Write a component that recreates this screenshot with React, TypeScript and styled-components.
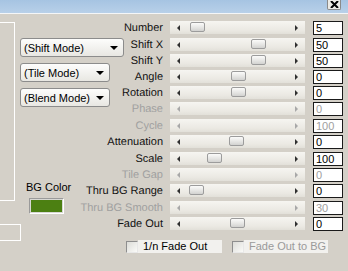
import React from 'react'
import styled, { createGlobalStyle } from 'styled-components'

const GlobalStyle = createGlobalStyle`
  html, body {
    margin: 0;
    padding: 0;
    background: #d4d0c8;
    font-family: 'Liberation Sans', Arial, sans-serif;
    font-size: 11px;
    color: #000;
    overflow: hidden;
  }
`

const Window = styled.div`
  width: 348px;
  height: 271px;
  background: #d4d0c8;
`

const TitleBar = styled.div`
  height: 13px;
  border-bottom: 1px solid #f4f6f8;
  background: linear-gradient(#a6c4e2, #b8d0e9);
  display: flex;
  justify-content: flex-end;
  align-items: flex-start;
  padding-right: 7px;
`

const CloseButton = styled.div`
  width: 14px;
  height: 10px;
  box-sizing: border-box;
  background: #ecebe6;
  border: 1px solid #8a8a8a;
  border-top: none;
  border-radius: 0 0 2px 2px;
  display: flex;
  align-items: center;
  justify-content: center;
`

const Body = styled.div`
  display: grid;
  grid-template-columns: 20px 143px 142px 38px;
  grid-template-rows: 17px 16px 16px 16px 16px 17px 16px 17px 16px 16px 17px 16px 16px auto;
  padding-top: 6px;
`

const Strip = styled.div`
  grid-column: 1;
  grid-row: 1 / 15;
  display: flex;
  flex-direction: column;
`

const StripBox = styled.div<{ $top: number; $height: number; $width: number }>`
  margin-top: ${(p) => p.$top}px;
  height: ${(p) => p.$height}px;
  width: ${(p) => p.$width}px;
  box-sizing: border-box;
  border: 1px solid #fff;
  border-left: none;
`

const ModePanel = styled.div`
  grid-column: 2;
  grid-row: 1 / 14;
  display: flex;
  flex-direction: column;
  align-items: flex-start;
  padding-top: 18px;
  gap: 6px;
`

const Select = styled.div<{ $width: number }>`
  width: ${(p) => p.$width}px;
  height: 19px;
  box-sizing: border-box;
  border: 1px solid #8c8c8c;
  border-radius: 3px;
  background: linear-gradient(#fdfdfc, #e8e7e2);
  display: flex;
  align-items: center;
  justify-content: space-between;
  padding: 0 5px 0 3px;
  font-size: 11px;
`

const DownArrow = styled.span`
  width: 0;
  height: 0;
  border-left: 4px solid transparent;
  border-right: 4px solid transparent;
  border-top: 4px solid #000;
`

const ColorBlock = styled.div`
  margin-top: 68px;
  display: flex;
  flex-direction: column;
  align-items: flex-start;
  padding-left: 6px;
  gap: 4px;
`

const ColorLabel = styled.div`
  line-height: 13px;
`

const Swatch = styled.div`
  margin-left: 3px;
  width: 35px;
  height: 16px;
  box-sizing: border-box;
  border: 1px solid #9a9a9a;
  border-right-color: #fff;
  border-bottom-color: #fff;
  padding: 1px;
  background: #d8d8d4;
  & > div {
    width: 100%;
    height: 100%;
    background: #4c8012;
  }
`

const Label = styled.div<{ $row: number; $off?: boolean }>`
  grid-column: 2;
  grid-row: ${(p) => p.$row};
  align-self: start;
  text-align: right;
  white-space: nowrap;
  line-height: 16px;
  text-rendering: geometricPrecision;
  color: ${(p) => (p.$off ? '#a0a0a0' : '#111')};
`

const SliderCell = styled.div<{ $row: number }>`
  grid-column: 3;
  grid-row: ${(p) => p.$row};
  display: flex;
  align-items: flex-start;
  padding-top: 1px;
  padding-left: 7px;
`

const Track = styled.div<{ $off?: boolean }>`
  position: relative;
  width: 135px;
  height: 13px;
  background: linear-gradient(#f6f5f1, #ebe9e3 70%, #e2e0d9);
  display: flex;
  align-items: center;
  justify-content: space-between;
  padding: 0 7px;
  box-sizing: border-box;
  --arrow: ${(p) => (p.$off ? '#a8a8a8' : '#303030')};
`

const ArrowLeft = styled.span`
  width: 0;
  height: 0;
  border-top: 3px solid transparent;
  border-bottom: 3px solid transparent;
  border-right: 3px solid var(--arrow);
`

const ArrowRight = styled.span`
  width: 0;
  height: 0;
  border-top: 3px solid transparent;
  border-bottom: 3px solid transparent;
  border-left: 3px solid var(--arrow);
`

const Thumb = styled.div`
  position: absolute;
  top: 1px;
  width: 15px;
  height: 10px;
  box-sizing: border-box;
  border: 1px solid #9c9c9c;
  border-radius: 2px;
  background: linear-gradient(#fbfbfa, #e4e4e2 60%, #d2d2d0);
`

const FieldCell = styled.div<{ $row: number }>`
  grid-column: 4;
  grid-row: ${(p) => p.$row};
  display: flex;
  align-items: flex-start;
  padding-top: 1px;
  padding-left: 8px;
`

const Field = styled.div<{ $off?: boolean }>`
  width: 30px;
  height: 14px;
  box-sizing: border-box;
  border: 1px solid #1a1a1a;
  background: #fff;
  padding-left: 2px;
  line-height: 12px;
  font-size: 11px;
  color: ${(p) => (p.$off ? '#a0a0a0' : '#000')};
`

const CheckRow = styled.div`
  grid-column: 2 / 5;
  grid-row: 14;
  margin-top: 8px;
  display: flex;
  align-items: center;
  padding-left: 106px;
  gap: 10px;
`

const Check = styled.div`
  display: flex;
  align-items: center;
`

const Box = styled.div`
  width: 12px;
  height: 12px;
  box-sizing: border-box;
  border: 1px solid #8e8e8e;
  border-right-color: #e8e8e8;
  border-bottom-color: #e8e8e8;
  background: linear-gradient(135deg, #dcdcd8, #fafaf8);
`

const CheckText = styled.div<{ $off?: boolean; $width: number }>`
  width: ${(p) => p.$width}px;
  height: 13px;
  line-height: 13px;
  background: #f2f1ee;
  padding-left: 5px;
  box-sizing: border-box;
  color: ${(p) => (p.$off ? '#9a9a9a' : '#000')};
`

type Param = { name: string; value: string; thumb?: number; off?: boolean }

const params: Param[] = [
  { name: 'Number', value: '5', thumb: 20 },
  { name: 'Shift X', value: '50', thumb: 81 },
  { name: 'Shift Y', value: '50', thumb: 81 },
  { name: 'Angle', value: '0', thumb: 61 },
  { name: 'Rotation', value: '0', thumb: 61 },
  { name: 'Phase', value: '0', off: true },
  { name: 'Cycle', value: '100', off: true },
  { name: 'Attenuation', value: '0', thumb: 59 },
  { name: 'Scale', value: '100', thumb: 37 },
  { name: 'Tile Gap', value: '0', off: true },
  { name: 'Thru BG Range', value: '0', thumb: 19 },
  { name: 'Thru BG Smooth', value: '30', off: true },
  { name: 'Fade Out', value: '0', thumb: 60 },
]

const App = () => {
  return (
    <Window>
      <GlobalStyle />
      <TitleBar>
        <CloseButton>
          <svg width="9" height="7" viewBox="0 0 9 7">
            <path d="M1 0 L8 7 M8 0 L1 7" stroke="#000" strokeWidth="2" />
          </svg>
        </CloseButton>
      </TitleBar>
      <Body>
        <Strip>
          <StripBox $top={2} $height={179} $width={15} />
          <StripBox $top={23} $height={17} $width={21} />
        </Strip>
        <ModePanel>
          <Select $width={104}>
            (Shift Mode) <DownArrow />
          </Select>
          <Select $width={90}>
            (Tile Mode) <DownArrow />
          </Select>
          <Select $width={90}>
            (Blend Mode) <DownArrow />
          </Select>
          <ColorBlock>
            <ColorLabel>BG Color</ColorLabel>
            <Swatch>
              <div />
            </Swatch>
          </ColorBlock>
        </ModePanel>
        {params.map((p, i) => (
          <React.Fragment key={p.name}>
            <Label $row={i + 1} $off={p.off}>
              {p.name}
            </Label>
            <SliderCell $row={i + 1}>
              <Track $off={p.off}>
                <ArrowLeft />
                <ArrowRight />
                {p.thumb !== undefined && <Thumb style={{ left: p.thumb }} />}
              </Track>
            </SliderCell>
            <FieldCell $row={i + 1}>
              <Field $off={p.off}>{p.value}</Field>
            </FieldCell>
          </React.Fragment>
        ))}
        <CheckRow>
          <Check>
            <Box />
            <CheckText $width={84}>1/n Fade Out</CheckText>
          </Check>
          <Check>
            <Box />
            <CheckText $width={84} $off>
              Fade Out to BG
            </CheckText>
          </Check>
        </CheckRow>
      </Body>
    </Window>
  )
}

export default App
